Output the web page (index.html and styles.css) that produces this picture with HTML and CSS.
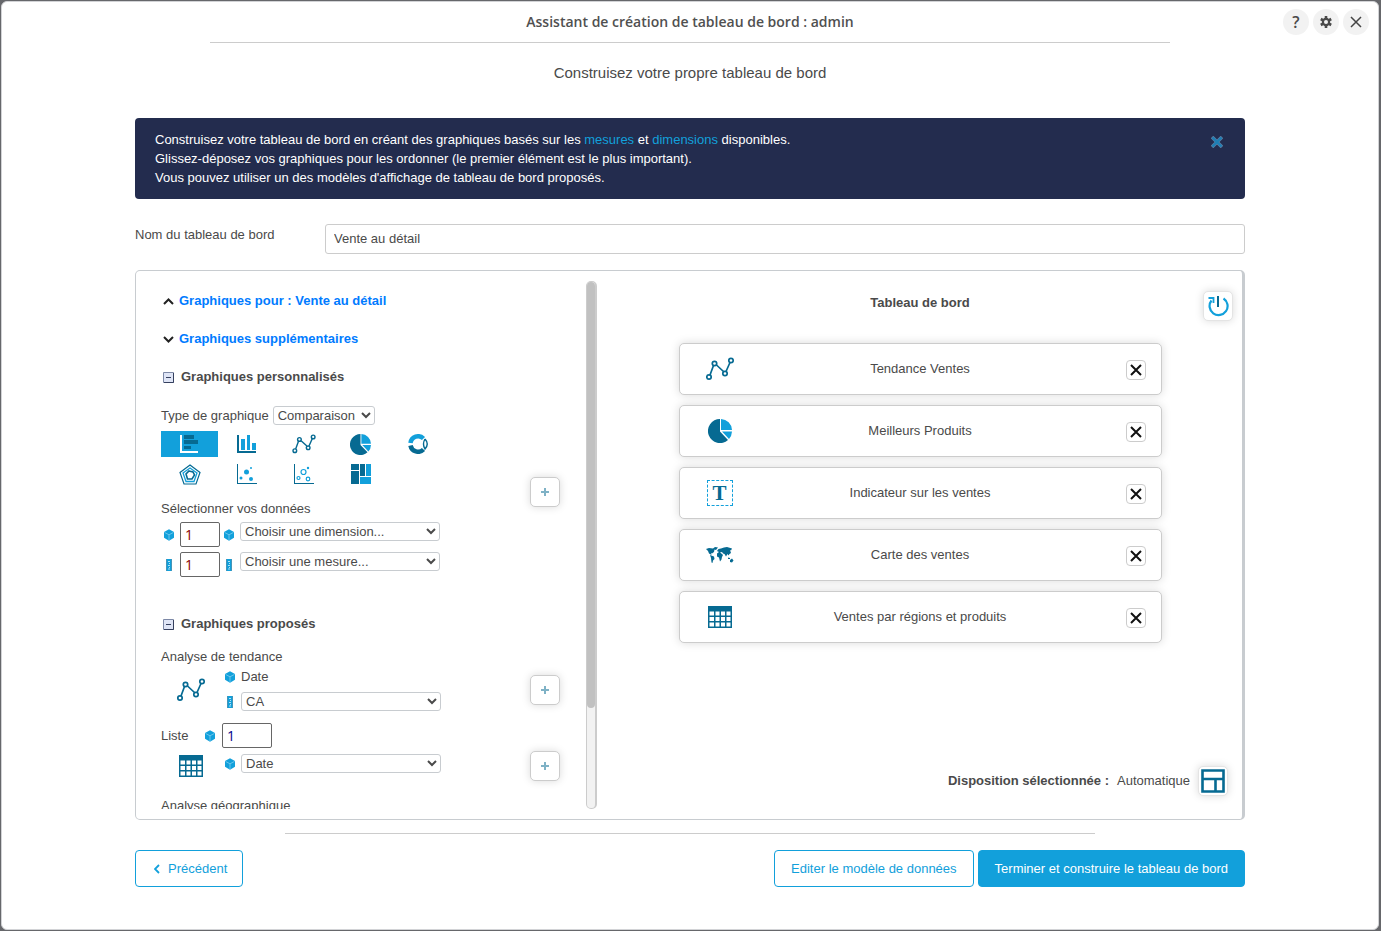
FILE: index.html
```html
<!DOCTYPE html>
<html lang="fr">
<head>
<meta charset="utf-8">
<title>Assistant de création de tableau de bord</title>
<link rel="stylesheet" href="styles.css">
</head>
<body>
<svg class="defs" aria-hidden="true">
  <symbol id="trend" viewBox="0 0 28 24"><g fill="none" stroke="#066a92" stroke-width="1.700"><path d="M4 18 7.500 8.500M10.500 8l7 6.500M20 14.500l4-9"/><circle cx="3" cy="20" r="2.200"/><circle cx="8.500" cy="6.500" r="2.200"/><circle cx="19" cy="16.500" r="2.200"/><circle cx="25" cy="3.500" r="2.200"/></g></symbol>
  <symbol id="pie" viewBox="0 0 24 24"><path fill="#066a92" d="M12 0A12 12 0 1 0 20 20.900L12 12.500Z"/><path fill="#12a0db" d="M13 0a11.500 11.500 0 0 1 11 11H13ZM24 12.500a12 12 0 0 1-3 7.500l-7-7.500Z"/></symbol>
  <symbol id="table" viewBox="0 0 24 22"><path fill="#066a92" fill-rule="evenodd" d="M0 0h24v22H0ZM1.500 5.500V9.500H6V5.500ZM7.500 5.500V9.500H11.500V5.500ZM13 5.500V9.500H17V5.500ZM18.500 5.500V9.500H22.500V5.500ZM1.500 11V15H6V11ZM7.500 11V15H11.500V11ZM13 11V15H17V11ZM18.500 11V15H22.500V11ZM1.500 16.500V20.500H6V16.500ZM7.500 16.500V20.500H11.500V16.500ZM13 16.500V20.500H17V16.500ZM18.500 16.500V20.500H22.500V16.500Z"/></symbol>
  <symbol id="cube" viewBox="0 0 10 12"><path fill="#12a0db" d="M5 .3 10 3v5.800L5 11.700 0 8.800V3Z"/><path fill="none" stroke="#8fd4f2" stroke-width=".7" d="M.5 3.400 5 5.800l4.500-2.400M5 5.800V11"/></symbol>
  <symbol id="ruler" viewBox="0 0 6 12"><path fill="#12a0db" d="M0 0h6v12H0z"/><path fill="none" stroke="#4595b8" d="M.5 0v12M5.500 0v12"/><path stroke="#d8f0fa" stroke-width=".8" d="M2 2.500h2M3 4.500h1M2 6.500h2M3 8.500h1M2 10h2"/></symbol>
  <symbol id="cross" viewBox="0 0 12 12"><path fill="none" stroke="currentColor" stroke-width="2" d="m1 1 10 10M11 1 1 11"/></symbol>
  <symbol id="minus" viewBox="0 0 11 11"><path fill="#dfe5f6" stroke="#7c88a6" d="M.5.500h10v10H.5z"/><path fill="none" stroke="#35405e" d="M10.500 1v9.500H1M3 5.500h5"/></symbol>
  <symbol id="plus" viewBox="0 0 8 8"><path stroke="#7fb2c6" stroke-width="2" d="M4 0v8M0 4h8"/></symbol>
</svg>

<main class="dialog">
  <header class="top">
    <h1>Assistant de création de tableau de bord : admin</h1>
    <nav class="tools">
      <button class="round" aria-label="Aide">?</button>
      <button class="round" aria-label="Paramètres"><svg width="12" height="12" viewBox="0 0 12 12"><path fill="none" stroke="#4a4a4a" stroke-width="2.600" d="M6 0v12M.8 3l10.400 6M.8 9l10.400-6"/><circle cx="6" cy="6" r="4.200" fill="#4a4a4a"/><circle cx="6" cy="6" r="2" fill="#f2f2f2"/></svg></button>
      <button class="round" aria-label="Fermer"><svg width="12" height="12" viewBox="0 0 12 12"><path fill="none" stroke="#444" stroke-width="1.500" d="m1 1 10 10M11 1 1 11"/></svg></button>
    </nav>
  </header>
  <p class="subtitle">Construisez votre propre tableau de bord</p>

  <div class="container">
    <section class="notice">
      <p>Construisez votre tableau de bord en créant des graphiques basés sur les <a href="#">mesures</a> et <a href="#">dimensions</a> disponibles.<br>
      Glissez-déposez vos graphiques pour les ordonner (le premier élément est le plus important).<br>
      Vous pouvez utiliser un des modèles d'affichage de tableau de bord proposés.</p>
      <button class="notice-close" aria-label="Masquer"><svg width="12" height="12" viewBox="0 0 12 12"><path stroke="#5d7fa3" stroke-width="3.600" d="m1 1 10 10M11 1 1 11"/><path stroke="#1d7fb5" stroke-width="2.400" d="m1.500 1.500 9 9M10.500 1.500l-9 9"/></svg></button>
    </section>

    <div class="name-row">
      <label for="name">Nom du tableau de bord</label>
      <input id="name" type="text" value="Vente au détail">
    </div>

    <div class="panel">
      <section class="library">
        <h2 class="fold"><svg width="11" height="7" viewBox="0 0 11 7"><path fill="none" stroke="#222" stroke-width="2" d="M1 6l4.500-4.500L10 6"/></svg><a href="#">Graphiques pour : Vente au détail</a></h2>
        <h2 class="fold"><svg width="11" height="7" viewBox="0 0 11 7"><path fill="none" stroke="#222" stroke-width="2" d="M1 1l4.500 4.500L10 1"/></svg><a href="#">Graphiques supplémentaires</a></h2>
        <h2 class="fold boxed"><svg width="11" height="11"><use href="#minus"/></svg>Graphiques personnalisés</h2>

        <div class="custom">
          <div class="custom-form">
            <div class="type-row">
              <label for="type">Type de graphique</label>
              <select id="type" class="narrow"><option>Comparaison</option></select>
            </div>
            <div class="types">
              <button class="type active" aria-label="Barres"><svg width="19" height="18" viewBox="0 0 19 18"><path fill="#fff" d="M0 0h2v16h16v2H0z"/><path fill="#066a92" d="M4 0h10v4H4zM4 5h14v4H4zM4 11h7v3H4z"/></svg></button>
              <button class="type" aria-label="Colonnes"><svg width="19" height="18" viewBox="0 0 19 18"><path fill="#066a92" d="M0 0h2v16h17v2H0z"/><path fill="#12a0db" d="M4 4h4v11H4zM10 0h3v15h-3zM15 8h4v7h-4z"/></svg></button>
              <button class="type" aria-label="Courbe"><svg width="24" height="20"><use href="#trend"/></svg></button>
              <button class="type" aria-label="Secteurs"><svg width="21" height="21"><use href="#pie"/></svg></button>
              <button class="type" aria-label="Anneau"><svg width="20" height="20" viewBox="0 0 20 20"><path fill="none" stroke="#12a0db" stroke-width="4.500" d="M2.500 9A7.700 7.700 0 0 1 15.500 4.500"/><path fill="none" stroke="#066a92" stroke-width="4.500" d="M2.500 11.500A7.700 7.700 0 0 0 15.500 15.500"/><path fill="none" stroke="#066a92" stroke-width="1.400" d="M17 5q4.500 5 0 10-3-5 0-10"/></svg></button>
              <button class="type" aria-label="Radar"><svg width="22" height="21" viewBox="0 0 22 21"><g fill="none"><path stroke="#066a92" stroke-width="1.200" d="M11 1 21 8.500 17 20H5L1 8.500Z"/><path stroke="#12a0db" stroke-width="1.300" d="M11 4l7 5-3 8.500H7L4 9Z"/><path stroke="#066a92" stroke-width="1.600" d="m10 7 4 1 1.500 3L13 15H8.500L7 10Z"/></g></svg></button>
              <button class="type" aria-label="Nuage de points"><svg width="20" height="20" viewBox="0 0 20 20"><path fill="#066a92" d="M0 0h1v19h19v1H0z"/><g fill="#12a0db"><circle cx="9.500" cy="8" r="2.500"/><circle cx="4" cy="14" r="1.500"/><circle cx="14" cy="15" r="2"/><circle cx="14" cy="4" r="1"/></g></svg></button>
              <button class="type" aria-label="Bulles"><svg width="20" height="20" viewBox="0 0 20 20"><path fill="#066a92" d="M0 0h1v19h19v1H0z"/><g fill="none" stroke="#12a0db" stroke-width="1.200"><circle cx="9.500" cy="8" r="2.500"/><circle cx="4.500" cy="14" r="1.500"/><circle cx="14" cy="15" r="1.800"/><circle cx="14" cy="4" r=".6"/></g></svg></button>
              <button class="type" aria-label="Treemap"><svg width="20" height="20" viewBox="0 0 20 20"><path fill="#066a92" d="M0 0h8v6H0zM0 7h8v13H0zM9 0h5v12H9z"/><path fill="#12a0db" d="M15 0h5v12h-5zM9 13h11v7H9z"/></svg></button>
            </div>
            <p class="pick">Sélectionner vos données</p>
            <div class="data-row">
              <svg class="mark" width="10" height="12"><use href="#cube"/></svg>
              <input class="count red" type="text" value="1" aria-label="Nombre de dimensions">
              <svg class="mark" width="10" height="12"><use href="#cube"/></svg>
              <select class="wide" aria-label="Dimension"><option>Choisir une dimension...</option></select>
            </div>
            <div class="data-row">
              <svg class="mark" width="10" height="12"><use href="#ruler"/></svg>
              <input class="count red" type="text" value="1" aria-label="Nombre de mesures">
              <svg class="mark" width="10" height="12"><use href="#ruler"/></svg>
              <select class="wide" aria-label="Mesure"><option>Choisir une mesure...</option></select>
            </div>
          </div>
          <button class="add" aria-label="Ajouter"><svg width="8" height="8"><use href="#plus"/></svg></button>
        </div>

        <h2 class="fold boxed proposed"><svg width="11" height="11"><use href="#minus"/></svg>Graphiques proposés</h2>
        <p class="group">Analyse de tendance</p>
        <div class="item">
          <svg class="item-icon" width="28" height="24"><use href="#trend"/></svg>
          <div class="fields">
            <div class="field"><svg width="10" height="12"><use href="#cube"/></svg><span class="plain">Date</span></div>
            <div class="field"><svg width="10" height="12"><use href="#ruler"/></svg><select class="wide" aria-label="Mesure de tendance"><option>CA</option></select></div>
          </div>
          <button class="add" aria-label="Ajouter la tendance"><svg width="8" height="8"><use href="#plus"/></svg></button>
        </div>
        <div class="list-row">
          <label for="list">Liste</label>
          <svg width="10" height="12"><use href="#cube"/></svg>
          <input id="list" class="count blue" type="text" value="1">
        </div>
        <div class="item">
          <svg class="item-icon" width="24" height="22"><use href="#table"/></svg>
          <div class="fields single">
            <div class="field"><svg width="10" height="12"><use href="#cube"/></svg><select class="wide" aria-label="Dimension de liste"><option>Date</option></select></div>
          </div>
          <button class="add" aria-label="Ajouter la liste"><svg width="8" height="8"><use href="#plus"/></svg></button>
        </div>
        <p class="group geo">Analyse géographique</p>
      </section>
      <div class="track"><div class="thumb"></div></div>

      <section class="board">
        <header class="board-head">
          <h2>Tableau de bord</h2>
          <button class="tool" aria-label="Réinitialiser"><svg width="22" height="22" viewBox="0 0 22 22"><path fill="none" stroke="#12a0db" stroke-width="2.200" d="M4.500 5.500A9 9 0 1 0 16.500 3.500"/><path fill="none" stroke="#12a0db" stroke-width="1.800" d="M1.500 3H6.500V8"/><path fill="#066a92" d="M10 1h2v11h-2z"/></svg></button>
        </header>
        <ul class="cards">
          <li class="card"><span class="pic"><svg width="28" height="24"><use href="#trend"/></svg></span><span class="label">Tendance Ventes</span><button class="remove" aria-label="Retirer"><svg width="12" height="12"><use href="#cross"/></svg></button></li>
          <li class="card"><span class="pic"><svg width="24" height="24"><use href="#pie"/></svg></span><span class="label">Meilleurs Produits</span><button class="remove" aria-label="Retirer"><svg width="12" height="12"><use href="#cross"/></svg></button></li>
          <li class="card"><span class="pic"><span class="text-icon">T</span></span><span class="label">Indicateur sur les ventes</span><button class="remove" aria-label="Retirer"><svg width="12" height="12"><use href="#cross"/></svg></button></li>
          <li class="card"><span class="pic"><svg width="28" height="17" viewBox="0 0 28 17"><path fill="#066a92" d="M0 2 3 1l4 .5L9 0l3 .5L10 3 8.500 2.500 8 5 6 6.500 5 6l.5 2L3 6.500 2 4ZM4 8l4 1.500L8.500 12 7 13.500 6.500 16 5.500 15.500 5 11ZM11 4l1.500-2L15 1.500 18 .5l3-.5 5 1.500-1 2L24 3l1 3-1.500 1-1 1.500L21.500 7 20 9.500 18.500 7 17 6.500 16 5l-2 .5 2 1.500 1 1-1 2-.5 2.500L14 14.500l-1-4-2-1V6.500L13 5ZM22 10.500l2 .5v1h-2ZM24 13l2-1.500 1.500 2-1.500 2-2-.5Z"/></svg></span><span class="label">Carte des ventes</span><button class="remove" aria-label="Retirer"><svg width="12" height="12"><use href="#cross"/></svg></button></li>
          <li class="card"><span class="pic"><svg width="24" height="22"><use href="#table"/></svg></span><span class="label">Ventes par régions et produits</span><button class="remove" aria-label="Retirer"><svg width="12" height="12"><use href="#cross"/></svg></button></li>
        </ul>
        <footer class="layout">
          <strong>Disposition sélectionnée :</strong><span>Automatique</span>
          <button class="tool" aria-label="Changer la disposition"><svg width="24" height="24" viewBox="0 0 24 24"><path fill="none" stroke="#066a92" stroke-width="2.600" d="M1.500 1.500h21v21h-21ZM1.500 10h21M14.500 10v12"/></svg></button>
        </footer>
      </section>
    </div>

    <hr class="rule">
    <footer class="actions">
      <button class="btn back"><svg width="6" height="10" viewBox="0 0 6 10"><path fill="none" stroke="currentColor" stroke-width="1.800" d="M5 1 1 5l4 4"/></svg>Précédent</button>
      <button class="btn edit">Editer le modèle de données</button>
      <button class="btn primary">Terminer et construire le tableau de bord</button>
    </footer>
  </div>
</main>
</body>
</html>
```

FILE: styles.css
```css
* { box-sizing: border-box; }

body {
  margin: 0;
  background: #66676b;
  color: #4a4a4a;
  font: 13px/16px "Liberation Sans", Arial, sans-serif;
}

h1, h2, p, ul { margin: 0; padding: 0; }
button, input, select { font: inherit; color: inherit; }
button { padding: 0; cursor: pointer; }
a { color: #007bff; text-decoration: none; }
svg { flex: none; display: block; }
.defs { position: absolute; width: 0; height: 0; }

.dialog {
  min-height: calc(100vh - 2px);
  margin: 1px 2px 1px 1px;
  border: 1px solid #d2d3d6;
  border-radius: 6px;
  background: #fff;
}

.top {
  display: grid;
  grid-template-columns: 1fr auto 1fr;
  align-items: center;
  height: 40px;
  padding: 0 9px;
}

.top h1 {
  grid-column: 2;
  font: 600 14px/20px "Open Sans", sans-serif;
  color: #505050;
}

.tools { display: flex; justify-content: flex-end; gap: 4px; }

.round {
  display: grid;
  place-items: center;
  width: 26px;
  height: 26px;
  border: 0;
  border-radius: 50%;
  background: #f2f2f2;
  font: 600 16px/20px "Open Sans", sans-serif;
}

.subtitle {
  width: 960px;
  max-width: 90%;
  margin: 0 auto;
  padding-top: 20px;
  border-top: 1px solid #ccc;
  font-size: 15px;
  line-height: 20px;
  text-align: center;
}

.container { max-width: 1110px; margin: 0 auto; padding-top: 35px; }

.notice {
  display: flex;
  justify-content: space-between;
  align-items: flex-start;
  padding: 12px 22px 12px 20px;
  border-radius: 4px;
  background: #232c4e;
  color: #fff;
  line-height: 19px;
}

.notice a { color: #12a0db; }
.notice-close { margin-top: 6px; border: 0; background: none; }

.name-row { display: flex; align-items: center; margin: 25px 0 16px; }
.name-row label { width: 190px; padding-bottom: 8px; }

.name-row input {
  flex: 1;
  height: 30px;
  padding: 0 8px 2px;
  border: 1px solid #ccc;
  border-radius: 3px;
}

.panel {
  display: flex;
  padding: 10px 0;
  border: 1px solid #c8ccd0;
  border-right-width: 3px;
  border-radius: 5px;
}

.library {
  width: 450px;
  height: calc(100vh - 403px);
  padding: 1px 26px 0 25px;
  overflow: hidden;
}

.fold {
  display: flex;
  align-items: center;
  gap: 5px;
  height: 38px;
  padding-left: 2px;
  font-size: 13px;
}

.boxed { gap: 7px; }

.custom {
  display: flex;
  align-items: center;
  justify-content: space-between;
}

.custom-form { padding: 10px 0 11px; }
.type-row { display: flex; align-items: center; gap: 4px; }

select {
  height: 19px;
  padding: 0;
  border: 1px solid #c8ccd0;
  border-radius: 3px;
  background-color: #fff;
}

.narrow { width: 102px; }
.wide { width: 200px; }

.types {
  display: grid;
  grid-template-columns: repeat(5, 57px);
  grid-auto-rows: 26px;
  row-gap: 4px;
  margin-top: 6px;
}

.type { display: grid; place-items: center; border: 0; background: none; }
.type.active { background: #12a0db; }
.pick { margin: 14px 0 5px; }

.data-row { display: flex; align-items: center; height: 25px; margin-bottom: 5px; }
.data-row:last-child { margin-bottom: 0; }
.data-row .mark { margin: 0 6px 0 3px; }
.data-row .count + .mark { margin: 0 6px 0 4px; }
.data-row .wide { align-self: flex-start; }

.count {
  width: 40px;
  height: 25px;
  padding: 0 4px;
  border: 1px solid #666;
  border-radius: 2px;
  font-family: "Open Sans", sans-serif;
  font-size: 14px;
}

.count.red { color: #8b0000; }
.count.blue { width: 50px; color: #00008b; }

.add, .tool {
  display: grid;
  place-items: center;
  width: 30px;
  height: 30px;
  border: 1px solid #ccc;
  border-radius: 5px;
  background: #fff;
  box-shadow: 0 0 8px rgba(0, 0, 0, .15);
}

.tool { border-color: #e4e4e4; }
.proposed { margin-top: 17px; }
.group { margin: 6px 0 4px; }
.item { display: flex; align-items: center; }
.item-icon { width: 60px; }
.item .add { margin-left: auto; }
.fields { display: grid; gap: 7px; padding-left: 4px; }
.fields.single { padding-bottom: 5px; }
.field { display: flex; align-items: center; gap: 6px; }
.list-row { display: flex; align-items: center; margin: 12px 0 3px; }
.list-row label { width: 44px; }
.list-row .count { margin-left: 7px; }
.geo { margin-top: 17px; white-space: nowrap; }

.track {
  width: 11px;
  border: 1px solid #ccc;
  border-right-width: 2px;
  border-radius: 5px;
  background: #f2f2f2;
}

.thumb { height: 81%; border-radius: 5px; background: #c1c1c1; }

.board { display: flex; flex: 1; flex-direction: column; margin-left: 1px; }
.board-head { display: grid; grid-template-columns: 1fr auto 1fr; height: 62px; padding: 10px 9px 0; }
.board-head h2 { grid-column: 2; padding-top: 4px; font-size: 13px; }
.board-head .tool { justify-self: end; }

.cards {
  display: grid;
  gap: 10px;
  width: 75%;
  margin: 0 auto;
  list-style: none;
}

.card {
  display: grid;
  grid-template-columns: 80px 1fr 80px;
  align-items: center;
  height: 52px;
  border: 1px solid #ccc;
  border-radius: 5px;
  background: #fff;
  box-shadow: 0 0 10px rgba(0, 0, 0, .15);
  text-align: center;
}

.pic { display: grid; place-items: center; }

.text-icon {
  width: 26px;
  height: 26px;
  border: 1px dashed #12a0db;
  color: #066a92;
  font: bold 21px/24px "Liberation Serif", serif;
}

.remove {
  display: grid;
  place-items: center;
  justify-self: end;
  width: 20px;
  height: 20px;
  margin: 2px 15px 0 0;
  border: 1px solid #ccc;
  border-radius: 4px;
  background: #fff;
  color: #111;
}

.layout {
  display: flex;
  align-items: center;
  justify-content: flex-end;
  gap: 8px;
  margin-top: auto;
  padding: 0 14px 13px 0;
}

.rule {
  width: 810px;
  max-width: 90%;
  height: 1px;
  margin: 13px auto 16px;
  border: 0;
  background: #ccc;
}

.actions { display: flex; gap: 4px; }

.btn {
  height: 37px;
  padding: 0 16px;
  border: 1px solid #12a0db;
  border-radius: 4px;
  background: #fff;
  color: #12a0db;
}

.back { display: flex; align-items: center; gap: 8px; margin-right: auto; padding: 0 15px 0 18px; }
.primary { background: #12a0db; color: #fff; }
```
